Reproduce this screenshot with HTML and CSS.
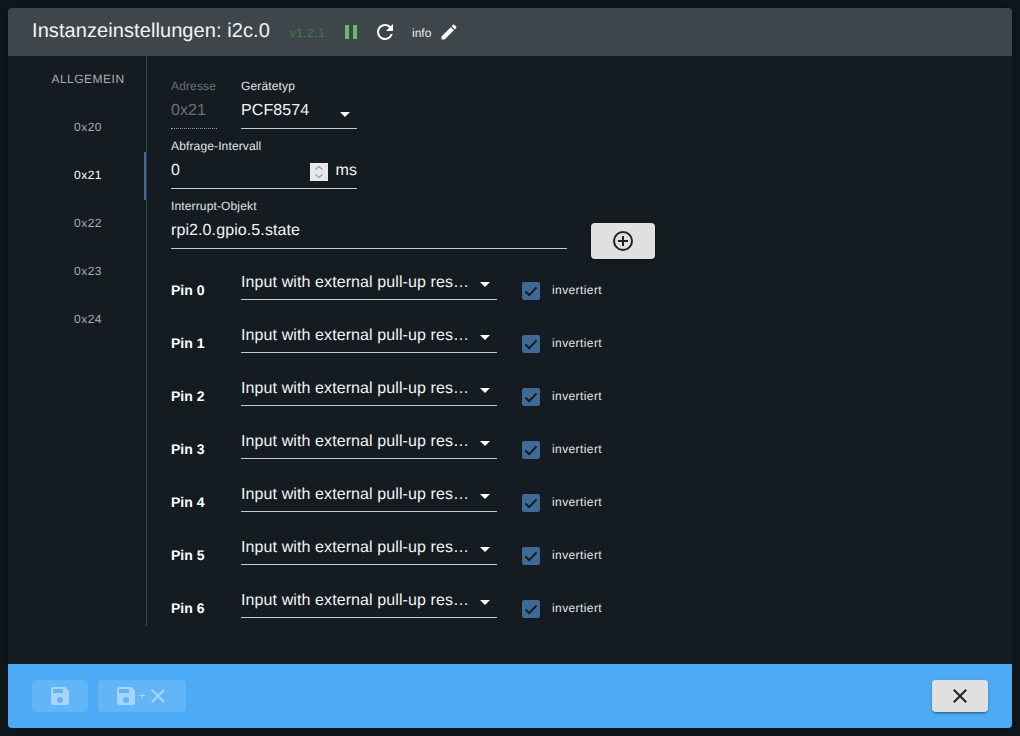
FILE: index.html
```html
<!DOCTYPE html>
<html lang="de">
<head>
<meta charset="utf-8">
<title>Instanzeinstellungen</title>
<link rel="stylesheet" href="styles.css">
</head>
<body>
<div class="dialog">
  <header class="head">
    <h1 class="title">Instanzeinstellungen: i2c.0</h1>
    <span class="version">v1.2.1</span>
    <svg class="ico pause" viewBox="0 0 24 24"><path d="M6 5h4v14H6zM14 5h4v14h-4z"/></svg>
    <svg class="ico reload" viewBox="0 0 24 24"><path d="M17.65 6.35A7.96 7.96 0 0 0 12 4a8 8 0 1 0 7.73 10h-2.08A6 6 0 1 1 12 6c1.66 0 3.14.69 4.22 1.78L13 11h7V4z"/></svg>
    <span class="info">info</span>
    <svg class="ico edit" viewBox="0 0 24 24"><path d="M3 17.25V21h3.75L17.81 9.94l-3.75-3.75zM20.71 7.04a1 1 0 0 0 0-1.41l-2.34-2.34a1 1 0 0 0-1.41 0l-1.83 1.83 3.75 3.75z"/></svg>
  </header>
  <div class="body">
    <nav class="tabs">
      <div class="tab">ALLGEMEIN</div>
      <div class="tab">0x20</div>
      <div class="tab active">0x21</div>
      <div class="tab">0x22</div>
      <div class="tab">0x23</div>
      <div class="tab">0x24</div>
    </nav>
    <main class="content">
      <div class="row">
        <div class="field addr disabled">
          <label class="lbl">Adresse</label>
          <div class="val">0x21</div>
        </div>
        <div class="field type">
          <label class="lbl">Gerätetyp</label>
          <div class="val sel">PCF8574<span class="caret"></span></div>
        </div>
      </div>
      <div class="field interval">
        <label class="lbl">Abfrage-Intervall</label>
        <div class="val">
          <span class="grow">0</span>
          <span class="spin">
            <svg viewBox="0 0 18 18"><path d="M5.500 6.500l3.500-3 3.500 3M5.500 11.500l3.500 3 3.500-3"/></svg>
          </span>
          <span class="unit">ms</span>
        </div>
      </div>
      <div class="row objrow">
        <div class="field obj">
          <label class="lbl">Interrupt-Objekt</label>
          <div class="val">rpi2.0.gpio.5.state</div>
        </div>
        <button class="btn add" type="button">
          <svg class="ico dark" viewBox="0 0 24 24"><path d="M13 7h-2v4H7v2h4v4h2v-4h4v-2h-4zM12 2a10 10 0 1 0 0 20 10 10 0 0 0 0-20zm0 18a8 8 0 1 1 0-16 8 8 0 0 1 0 16z"/></svg>
        </button>
      </div>
      <div class="pins">
        <div class="pin"><b class="pinname">Pin 0</b><div class="val sel pinsel"><span class="clip">Input with external pull-up res…</span><span class="caret"></span></div><span class="check"><svg viewBox="0 0 18 18"><path d="M3.5 9.500l3.600 3.600 7.400-7.600"/></svg></span><span class="chk-label">invertiert</span></div>
        <div class="pin"><b class="pinname">Pin 1</b><div class="val sel pinsel"><span class="clip">Input with external pull-up res…</span><span class="caret"></span></div><span class="check"><svg viewBox="0 0 18 18"><path d="M3.5 9.500l3.600 3.600 7.400-7.600"/></svg></span><span class="chk-label">invertiert</span></div>
        <div class="pin"><b class="pinname">Pin 2</b><div class="val sel pinsel"><span class="clip">Input with external pull-up res…</span><span class="caret"></span></div><span class="check"><svg viewBox="0 0 18 18"><path d="M3.5 9.500l3.600 3.600 7.400-7.600"/></svg></span><span class="chk-label">invertiert</span></div>
        <div class="pin"><b class="pinname">Pin 3</b><div class="val sel pinsel"><span class="clip">Input with external pull-up res…</span><span class="caret"></span></div><span class="check"><svg viewBox="0 0 18 18"><path d="M3.5 9.500l3.600 3.600 7.400-7.600"/></svg></span><span class="chk-label">invertiert</span></div>
        <div class="pin"><b class="pinname">Pin 4</b><div class="val sel pinsel"><span class="clip">Input with external pull-up res…</span><span class="caret"></span></div><span class="check"><svg viewBox="0 0 18 18"><path d="M3.5 9.500l3.600 3.600 7.400-7.600"/></svg></span><span class="chk-label">invertiert</span></div>
        <div class="pin"><b class="pinname">Pin 5</b><div class="val sel pinsel"><span class="clip">Input with external pull-up res…</span><span class="caret"></span></div><span class="check"><svg viewBox="0 0 18 18"><path d="M3.5 9.500l3.600 3.600 7.400-7.600"/></svg></span><span class="chk-label">invertiert</span></div>
        <div class="pin"><b class="pinname">Pin 6</b><div class="val sel pinsel"><span class="clip">Input with external pull-up res…</span><span class="caret"></span></div><span class="check"><svg viewBox="0 0 18 18"><path d="M3.5 9.500l3.600 3.600 7.400-7.600"/></svg></span><span class="chk-label">invertiert</span></div>
      </div>
    </main>
  </div>
  <footer class="foot">
    <button class="btn off save" type="button">
      <svg class="ico" viewBox="0 0 24 24"><path d="M17 3H5a2 2 0 0 0-2 2v14a2 2 0 0 0 2 2h14a2 2 0 0 0 2-2V7zm-5 16a3 3 0 1 1 0-6 3 3 0 0 1 0 6zm3-10H5V5h10z"/></svg>
    </button>
    <button class="btn off saveclose" type="button">
      <svg class="ico" viewBox="0 0 24 24"><path d="M17 3H5a2 2 0 0 0-2 2v14a2 2 0 0 0 2 2h14a2 2 0 0 0 2-2V7zm-5 16a3 3 0 1 1 0-6 3 3 0 0 1 0 6zm3-10H5V5h10z"/></svg>
      <span class="plus">+</span>
      <svg class="ico" viewBox="0 0 24 24"><path d="M19 6.410 17.590 5 12 10.590 6.410 5 5 6.410 10.590 12 5 17.590 6.410 19 12 13.410 17.590 19 19 17.590 13.410 12z"/></svg>
    </button>
    <button class="btn close" type="button">
      <svg class="ico dark" viewBox="0 0 24 24"><path d="M19 6.410 17.590 5 12 10.590 6.410 5 5 6.410 10.590 12 5 17.590 6.410 19 12 13.410 17.590 19 19 17.590 13.410 12z"/></svg>
    </button>
  </footer>
</div>
</body>
</html>
```
FILE: styles.css
```css
* { box-sizing: border-box; }
html, body { height: 100%; }
body {
  margin: 0;
  padding: 8px;
  background: #10171c;
  font-family: "Liberation Sans", Arial, sans-serif;
  text-rendering: geometricPrecision;
  color: #fff;
  overflow: hidden;
}
.dialog {
  height: 720px;
  display: flex;
  flex-direction: column;
  background: #141c22;
  border-radius: 4px;
  overflow: hidden;
  box-shadow: 0 0 8px rgba(0,0,0,.4);
}
.head {
  height: 48px;
  flex: none;
  display: flex;
  align-items: center;
  padding-left: 24px;
  background: #3f464b;
}
.title { margin: 0; font-size: 20px; font-weight: 400; letter-spacing: .08px; position: relative; top: -1px; color: #f2f3f3; }
.version { margin-left: 20px; font-size: 12px; color: #3f7a44; letter-spacing: .4px; position: relative; top: 1px; }
.ico { width: 24px; height: 24px; fill: #fff; flex: none; display: block; }
.ico.dark { fill: #222; }
.pause { margin-left: 14px; fill: #66bb6a; }
.reload { margin-left: 10px; }
.info { margin-left: 15px; font-size: 12px; position: relative; top: 1px; color: #e8e9ea; }
.edit { margin-left: 8px; width: 20px; height: 20px; }
.body { flex: 1; display: flex; min-height: 0; }
.tabs { width: 139px; height: 570px; flex: none; border-right: 1px solid #3b4247; }
.tab {
  height: 48px;
  padding: 0 0 2px 22px;
  display: flex;
  align-items: center;
  justify-content: center;
  font-size: 12px;
  letter-spacing: .5px;
  color: #a9adb0;
}
.tab.active { color: #fff; box-shadow: inset -2px 0 0 #3f6a96; }
.content { padding: 23px 0 0 24px; flex: 1; }
.row { display: flex; }
.field { display: flex; flex-direction: column; }
.lbl { height: 14px; font-size: 12px; line-height: 14px; color: #e3e5e6; letter-spacing: .14px; }
.val {
  height: 36px;
  display: flex;
  align-items: center;
  font-size: 16px;
  letter-spacing: .1px;
  color: #f2f3f3;
  border-bottom: 1px solid #c4c6c8;
  padding-top: 1px;
  position: relative;
}
.addr { width: 46px; margin-right: 24px; }
.disabled .lbl, .disabled .val { color: #6c7175; }
.disabled .val { border-bottom: 1px dotted #9a9da0; }
.type { width: 116px; }
.caret {
  position: absolute;
  right: 7px;
  top: 19px;
  border: 5px solid transparent;
  border-top-color: #fff;
  border-bottom: 0;
}
.interval { width: 186px; margin-top: 10px; }
.grow { flex: 1; }
.spin {
  width: 18px;
  height: 18px;
  margin-right: 7px;
  background: #e9e9ed;
  display: block;
  position: relative;
  top: 1px;
}
.spin svg { display: block; width: 18px; height: 18px; fill: none; stroke: #9a9a9e; stroke-width: 1.2; }
.objrow { margin-top: 10px; }
.obj { width: 396px; }
.btn { border: 0; padding: 0; border-radius: 4px; display: flex; align-items: center; justify-content: center; height: 32px; }
.add {
  width: 64px;
  height: 36px;
  margin: 24px 0 0 24px;
  background: #e0e0e0;
  box-shadow: 0 3px 1px -2px rgba(0,0,0,.2), 0 2px 2px rgba(0,0,0,.14), 0 1px 5px rgba(0,0,0,.12);
}
.pin { height: 53px; padding-bottom: 4px; display: flex; align-items: center; }
.pinname { width: 70px; font-size: 14px; font-weight: 700; position: relative; top: 6px; }
.pinsel { width: 256px; height: 32px; padding: 0; }
.clip { white-space: nowrap; overflow: hidden; }
.pinsel .caret { top: 14px; }
.check {
  width: 18px;
  height: 18px;
  margin: 0 12px 0 25px;
  background: #3f6a96;
  border-radius: 2px;
  position: relative;
  top: 7px;
}
.check svg { display: block; fill: none; stroke: #141c22; stroke-width: 2; }
.chk-label { font-size: 12px; position: relative; top: 6px; color: #e3e5e6; letter-spacing: .4px; }
.foot {
  height: 64px;
  flex: none;
  display: flex;
  align-items: center;
  padding: 0 24px;
  background: #4dabf5;
}
.off { background: rgba(255,255,255,.12); }
.off .ico { fill: rgba(255,255,255,.45); }
.save { width: 56px; }
.saveclose { width: 88px; margin-left: 10px; }
.plus { font-size: 12px; color: rgba(255,255,255,.45); }
.close {
  width: 56px;
  margin-left: auto;
  background: #e0e0e0;
  box-shadow: 0 3px 1px -2px rgba(0,0,0,.2), 0 2px 2px rgba(0,0,0,.14), 0 1px 5px rgba(0,0,0,.12);
}
```
